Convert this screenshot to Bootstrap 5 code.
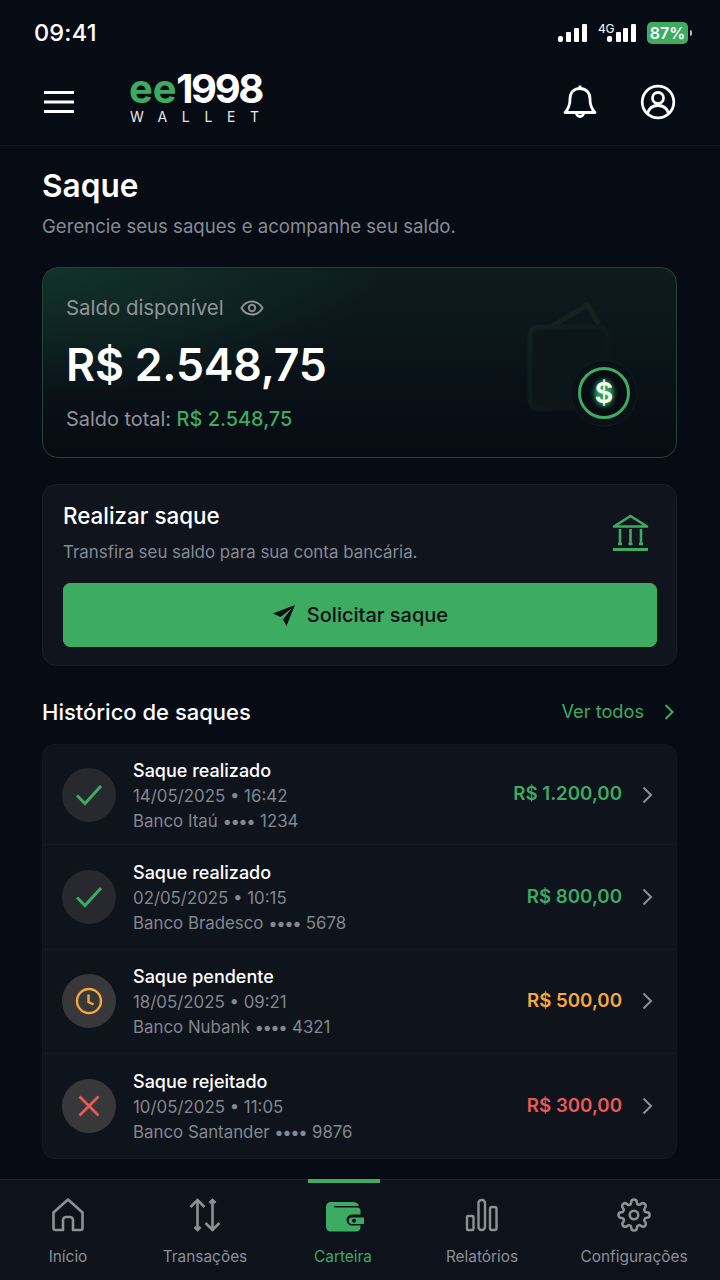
<!DOCTYPE html>
<html lang="pt-BR">
<head>
    <meta charset="UTF-8">
    <meta name="viewport" content="width=device-width, initial-scale=1.0">
    <title>Saque</title>
    <link href="https://cdn.jsdelivr.net/npm/bootstrap@5.3.0/dist/css/bootstrap.min.css" rel="stylesheet">
    <style>
        body { background: #070b14; font-family: Inter, "Noto Sans", sans-serif; color: #fff; width: 720px; height: 1280px; overflow: hidden; }
        .app-shell { height: 1280px; }
        .status-line { height: 66px; padding: 19px 28px 0 34px; }
        .status-time { font-size: 23.5px; font-weight: 500; line-height: 28px; letter-spacing: .2px; }
        .net-label { font-size: 12px; line-height: 11px; letter-spacing: -.3px; width: 18px; margin-left: 10px; margin-right: -9px; margin-top: -10px; }
        .batt-pill { background: #3dab62; border-radius: 5px; font-size: 16px; font-weight: 600; line-height: 22px; height: 22px; width: 41px; text-align: center; margin-left: 10px; }
        .batt-tip { width: 2px; height: 6px; background: #bbb; border-radius: 0 2px 2px 0; margin-left: 2px; }
        .top-bar { height: 80px; border-bottom: 1px solid #141922; padding: 0 44px 8px; }
        .logo-box { margin-left: 55px; margin-top: -9px; }
        .logo-main { font-size: 40px; font-weight: 700; line-height: 36px; letter-spacing: -2.4px; white-space: nowrap; }
        .logo-green { letter-spacing: -.2px; }
        .logo-green, .txt-green { color: #3dab62; }
        .logo-sub { font-size: 14px; line-height: 14px; letter-spacing: 14.6px; margin-top: 3px; padding-left: 1px; color: #e8e8e8; white-space: nowrap; }
        .page-body { padding: 0 43px 0 42px; }
        .page-title { font-size: 31.6px; font-weight: 600; line-height: 40px; margin: 20px 0 0; }
        .page-sub { font-size: 18.6px; line-height: 24px; color: #868b94; margin: 8px 0 0; }
        .balance-box { height: 191px; margin-top: 29px; border: 1px solid #234638; border-radius: 16px; background: radial-gradient(ellipse 340px 130px at 0 0, #12322a 0%, rgba(18,50,42,0) 100%), linear-gradient(180deg, #0e1c1e 0%, #0a1319 50%, #070b13 100%); padding: 26px 23px 0; overflow: hidden; }
        .balance-label { font-size: 20.4px; line-height: 28px; color: #8f9598; }
        .balance-value { font-size: 44.6px; font-weight: 600; line-height: 54px; margin-top: 16px; letter-spacing: -.2px; }
        .balance-total { font-size: 19.9px; line-height: 28px; color: #8f949a; margin-top: 13px; }
        .balance-total b { font-weight: 500; }
        .balance-art { right: 37px; top: 32px; }
        .withdraw-box { margin-top: 26px; height: 182px; background: #10141d; border: 1px solid #191e28; border-radius: 14px; padding: 15px 20px 0; }
        .withdraw-title { font-size: 22.4px; font-weight: 500; line-height: 32px; margin: 0; }
        .withdraw-sub { font-size: 16.9px; line-height: 22px; color: #858a93; margin: 9px 0 0; }
        .bank-icon { margin: 14px 7px 0 0; }
        .btn-saque { --bs-btn-bg: #3dab62; --bs-btn-hover-bg: #3dab62; --bs-btn-active-bg: #3dab62; --bs-btn-border-color: #3dab62; --bs-btn-color: #0a0f14; --bs-btn-hover-color: #0a0f14; width: 594px; height: 64px; margin-top: 20px; border-radius: 7px; font-size: 20px; font-weight: 500; gap: 11px; }
        .section-head { margin-top: 30px; height: 32px; }
        .section-title { font-size: 22px; font-weight: 500; line-height: 32px; margin: 0; }
        .see-all { font-size: 18.2px; color: #3dab62; text-decoration: none; gap: 20px; margin-right: 3px; }
        .history-list { margin-top: 16px; border-radius: 12px; background: #0f131c; border: 1px solid #131821; --bs-list-group-bg: transparent; --bs-list-group-border-width: 0; }
        .history-row { height: 104.5px; padding: 0 23px 0 19px; border-bottom: 1px solid #141922 !important; color: #fff; background: transparent; }
        .history-row:first-child { height: 100px; }
        .history-row:last-child { border-bottom: 0 !important; height: 104px; }
        .state-dot { width: 54px; height: 54px; border-radius: 50%; background: #27292e; flex: none; margin-right: 17px; }
        .state-warn, .state-bad { background: #38383a; }
        .row-text { padding-top: 2px; }
        .row-title { font-size: 18px; font-weight: 500; line-height: 26px; }
        .row-line { font-size: 16.85px; line-height: 25px; color: #83878f; }
        .row-dots { letter-spacing: -1.5px; margin-right: 1px; }
        .row-amount { font-size: 18.7px; font-weight: 600; margin-right: 20px; }
        .amt-ok { color: #3dab62; }
        .amt-warn { color: #f5a83c; }
        .amt-bad { color: #ea5a55; }
        .bottom-tabs { height: 101px; background: #0e121b; border-top: 1px solid #1c212b; }
        .tab-item { text-decoration: none; color: #8c9097; font-size: 15.4px; line-height: 20px; padding-top: 18px; }
        .tab-item.is-on { color: #3dab62; }
        .tab-item svg { margin-bottom: 15px; }
        .tab-item svg.wallet-ico { margin-left: 3px; }
        .tab-bar-on { top: -1px; left: 50%; margin-left: -35px; width: 72px; height: 4px; background: #3dab62; }
        .tab-1 { width: 136px; }
        .tab-2 { width: 138px; }
        .tab-3 { width: 138px; }
        .tab-4 { width: 140px; }
        .tab-5 { width: 164px; }
    </style>
</head>
<body>
    <div class="app-shell d-flex flex-column">
        <!-- Status bar -->
        <div class="status-line d-flex justify-content-between align-items-start flex-shrink-0">
            <span class="status-time">09:41</span>
            <div class="d-flex align-items-center" style="margin-top:3px">
                <svg width="30" height="20" viewBox="0 0 30 20" fill="#fff"><rect x="0" y="13" width="5" height="6" rx="2"/><rect x="8" y="9" width="5" height="10" rx="1"/><rect x="16" y="5" width="5" height="14" rx="1"/><rect x="24" y="1" width="5" height="18" rx="1"/></svg>
                <span class="net-label">4G</span>
                <svg width="30" height="20" viewBox="0 0 30 20" fill="#fff"><rect x="0" y="13" width="5" height="6" rx="2"/><rect x="9" y="9" width="5" height="10" rx="1"/><rect x="16" y="5" width="5" height="14" rx="1"/><rect x="24" y="1" width="5" height="18" rx="1"/></svg>
                <span class="batt-pill">87%</span>
                <span class="batt-tip"></span>
            </div>
        </div>

        <!-- Header -->
        <div class="top-bar d-flex align-items-center flex-shrink-0">
            <svg width="30" height="24" viewBox="0 0 30 24" fill="#fff"><rect y="1" width="30" height="3"/><rect y="10.500" width="30" height="3"/><rect y="20" width="30" height="3"/></svg>
            <div class="logo-box">
                <div class="logo-main"><span class="logo-green">ee</span>1998</div>
                <div class="logo-sub">WALLET</div>
            </div>
            <div class="ms-auto d-flex align-items-center" style="gap:42px">
                <svg width="36" height="38" viewBox="0 0 36 38" fill="none" stroke="#fff" stroke-width="2.800" stroke-linejoin="round"><path d="M18 5.500c-6.500 0-10 4.600-10 10.500 0 6.500-1.500 10-5 13.500h30c-3.500-3.500-5-7-5-13.500 0-5.900-3.500-10.500-10-10.500z"/><path d="M18 5.500V2.500"/><path d="M14.500 30a3.500 3.500 0 0 0 7 0"/></svg>
                <svg width="36" height="36" viewBox="0 0 36 36" fill="none" stroke="#fff" stroke-width="2.800"><circle cx="18" cy="18" r="15.800"/><circle cx="18" cy="14" r="5.500"/><path d="M7.500 29.500c1.500-5.500 5.500-8 10.500-8s9 2.500 10.500 8"/></svg>
            </div>
        </div>

        <!-- Content -->
        <div class="page-body flex-grow-1">
            <h1 class="page-title">Saque</h1>
            <p class="page-sub">Gerencie seus saques e acompanhe seu saldo.</p>

            <div class="balance-box position-relative">
                <div class="balance-label d-flex align-items-center gap-3">Saldo disponível
                    <svg width="24" height="18" viewBox="0 0 24 18" fill="none" stroke="#8a9094" stroke-width="2"><path d="M1.500 9C4 4.500 7.500 2.500 12 2.500S20 4.500 22.500 9C20 13.500 16.500 15.500 12 15.500S4 13.500 1.500 9z"/><circle cx="12" cy="9" r="3.200"/></svg>
                </div>
                <div class="balance-value">R$ 2.548,75</div>
                <div class="balance-total">Saldo total: <b class="txt-green">R$ 2.548,75</b></div>
                <svg class="balance-art position-absolute" width="112" height="130" viewBox="0 0 112 130" fill="none">
                    <defs>
                        <filter id="dollarGlow" x="-60%" y="-60%" width="220%" height="220%"><feGaussianBlur stdDeviation="2.500"/></filter>
                        <linearGradient id="ghostFill" x1="0" y1="0" x2="1" y2="1"><stop offset="0" stop-color="#122220"/><stop offset="1" stop-color="#0a1118"/></linearGradient>
                    </defs>
                    <path d="M24 27 L60 5 L72 24" stroke="#14231f" stroke-width="5" stroke-linejoin="round"/>
                    <rect x="3" y="27" width="78" height="82" rx="9" fill="#0c1518" stroke="url(#ghostFill)" stroke-width="5"/>
                    <circle cx="77" cy="93" r="33" fill="#0a1016" stroke="#0f1d1b" stroke-width="1"/>
                    <circle cx="77" cy="93" r="24.500" fill="#070c12" stroke="#3dab62" stroke-width="3"/>
                    <ellipse cx="77" cy="93" rx="9.500" ry="13" fill="#2fa35c" filter="url(#dollarGlow)"/>
                    <text x="77" y="103" text-anchor="middle" fill="#f2fff6" font-family="Inter, sans-serif" font-size="29" font-weight="600">$</text>
                </svg>
            </div>

            <div class="withdraw-box">
                <div class="d-flex justify-content-between">
                    <div>
                        <h2 class="withdraw-title">Realizar saque</h2>
                        <p class="withdraw-sub">Transfira seu saldo para sua conta bancária.</p>
                    </div>
                    <svg class="bank-icon" width="37" height="37" viewBox="0 0 37 37" fill="none" stroke="#3dab62" stroke-width="2.600" stroke-linejoin="round"><path d="M2 12.500L18.500 2 35 12.500z"/><path d="M8 15v15M18.500 15v15M29 15v15"/><path d="M6 30h4M16.500 30h4M27 30h4" stroke-width="2.400"/><path d="M1 35.500h35" stroke-width="3"/></svg>
                </div>
                <button type="button" class="btn btn-saque d-flex align-items-center justify-content-center">
                    <svg width="24" height="24" viewBox="0 0 24 24" fill="#0a0f14"><path d="M23 2L1 10.500l7.500 3.500L20 5 11 16.500 14.500 23z"/></svg>
                    <span>Solicitar saque</span>
                </button>
            </div>

            <div class="section-head d-flex justify-content-between align-items-center">
                <h2 class="section-title">Histórico de saques</h2>
                <a href="#" class="see-all d-flex align-items-center">Ver todos
                    <svg width="10" height="16" viewBox="0 0 10 16" fill="none" stroke="#3dab62" stroke-width="2"><path d="M1.500 1l7 7-7 7"/></svg>
                </a>
            </div>

            <div class="list-group history-list">
                <div class="list-group-item history-row d-flex align-items-center">
                    <div class="state-dot d-flex align-items-center justify-content-center">
                        <svg width="28" height="22" viewBox="0 0 28 22" fill="none" stroke="#3dab62" stroke-width="3"><path d="M2 11.500l8 8L26 2"/></svg>
                    </div>
                    <div class="flex-grow-1 row-text">
                        <div class="row-title">Saque realizado</div>
                        <div class="row-line">14/05/2025 • 16:42</div>
                        <div class="row-line">Banco Itaú <span class="row-dots">••••</span> 1234</div>
                    </div>
                    <span class="row-amount amt-ok">R$ 1.200,00</span>
                    <svg width="11" height="18" viewBox="0 0 11 18" fill="none" stroke="#8c9097" stroke-width="2"><path d="M1.500 1.500L9 9l-7.500 7.500"/></svg>
                </div>
                <div class="list-group-item history-row d-flex align-items-center">
                    <div class="state-dot d-flex align-items-center justify-content-center">
                        <svg width="28" height="22" viewBox="0 0 28 22" fill="none" stroke="#3dab62" stroke-width="3"><path d="M2 11.500l8 8L26 2"/></svg>
                    </div>
                    <div class="flex-grow-1 row-text">
                        <div class="row-title">Saque realizado</div>
                        <div class="row-line">02/05/2025 • 10:15</div>
                        <div class="row-line">Banco Bradesco <span class="row-dots">••••</span> 5678</div>
                    </div>
                    <span class="row-amount amt-ok">R$ 800,00</span>
                    <svg width="11" height="18" viewBox="0 0 11 18" fill="none" stroke="#8c9097" stroke-width="2"><path d="M1.500 1.500L9 9l-7.500 7.500"/></svg>
                </div>
                <div class="list-group-item history-row d-flex align-items-center">
                    <div class="state-dot state-warn d-flex align-items-center justify-content-center">
                        <svg width="28" height="28" viewBox="0 0 28 28" fill="none" stroke="#f5a83c" stroke-width="2.400"><circle cx="14" cy="14" r="12"/><path d="M13.500 7.500V15l5 2.500"/></svg>
                    </div>
                    <div class="flex-grow-1 row-text">
                        <div class="row-title">Saque pendente</div>
                        <div class="row-line">18/05/2025 • 09:21</div>
                        <div class="row-line">Banco Nubank <span class="row-dots">••••</span> 4321</div>
                    </div>
                    <span class="row-amount amt-warn">R$ 500,00</span>
                    <svg width="11" height="18" viewBox="0 0 11 18" fill="none" stroke="#8c9097" stroke-width="2"><path d="M1.500 1.500L9 9l-7.500 7.500"/></svg>
                </div>
                <div class="list-group-item history-row d-flex align-items-center">
                    <div class="state-dot state-bad d-flex align-items-center justify-content-center">
                        <svg width="24" height="24" viewBox="0 0 24 24" fill="none" stroke="#ea5a55" stroke-width="2.800"><path d="M2.500 2.500l19 19M21.500 2.500l-19 19"/></svg>
                    </div>
                    <div class="flex-grow-1 row-text">
                        <div class="row-title">Saque rejeitado</div>
                        <div class="row-line">10/05/2025 • 11:05</div>
                        <div class="row-line">Banco Santander <span class="row-dots">••••</span> 9876</div>
                    </div>
                    <span class="row-amount amt-bad">R$ 300,00</span>
                    <svg width="11" height="18" viewBox="0 0 11 18" fill="none" stroke="#8c9097" stroke-width="2"><path d="M1.500 1.500L9 9l-7.500 7.500"/></svg>
                </div>
            </div>
        </div>

        <!-- Bottom nav -->
        <nav class="bottom-tabs d-flex flex-shrink-0">
            <a href="#" class="tab-item tab-1 d-flex flex-column align-items-center">
                <svg width="32" height="34" viewBox="0 0 32 34" fill="none" stroke="#8c9097" stroke-width="2.600" stroke-linejoin="round"><path d="M1.500 14.500L16 1.500l14.500 13v15.500a2 2 0 0 1-2 2H21V22a3 3 0 0 0-3-3h-4a3 3 0 0 0-3 3v10H3.500a2 2 0 0 1-2-2z"/></svg>
                <span>Início</span>
            </a>
            <a href="#" class="tab-item tab-2 d-flex flex-column align-items-center">
                <svg width="34" height="34" viewBox="0 0 34 34" fill="none" stroke="#8c9097" stroke-width="2.600"><path d="M9.500 2v30"/><path d="M2.500 9l7-7 7 7"/><path d="M6.500 29l3 3 3-3"/><path d="M24.500 2v30"/><path d="M17.500 25l7 7 7-7"/><path d="M21.500 5l3-3 3 3"/></svg>
                <span>Transações</span>
            </a>
            <a href="#" class="tab-item tab-3 is-on d-flex flex-column align-items-center position-relative">
                <span class="tab-bar-on position-absolute"></span>
                <svg class="wallet-ico" width="40" height="34" viewBox="0 0 40 34" fill="#3dab62"><path d="M6 4h22c3 0 5 1 6 4H10c-1.500 0-1.500 1.500 0 1.500h22c2.500 0 3.500 1.500 3.500 3.500v3.500H27a5.500 5.500 0 0 0 0 11h8.500V29c0 3-2 4.500-4.500 4.500H6c-3 0-5-2-5-5V9c0-3 2-5 5-5z"/><path d="M27 19.500h12v6.500H27a3.250 3.250 0 0 1 0-6.500z"/><circle cx="29" cy="22.750" r="2" fill="#0e121b"/></svg>
                <span>Carteira</span>
            </a>
            <a href="#" class="tab-item tab-4 d-flex flex-column align-items-center">
                <svg width="34" height="34" viewBox="0 0 34 34" fill="none" stroke="#8c9097" stroke-width="2.400" stroke-linejoin="round"><rect x="2" y="18" width="6.500" height="14" rx="1"/><rect x="13.500" y="2" width="6.500" height="30" rx="3"/><rect x="25" y="9" width="6.500" height="23" rx="2"/></svg>
                <span>Relatórios</span>
            </a>
            <a href="#" class="tab-item tab-5 d-flex flex-column align-items-center">
                <svg width="34" height="34" viewBox="0 0 24 24" fill="none" stroke="#8c9097" stroke-width="1.800" stroke-linejoin="round"><circle cx="12" cy="12" r="3"/><path d="M19.400 15a1.650 1.650 0 0 0 .33 1.820l.06.06a2 2 0 1 1-2.830 2.830l-.06-.06a1.650 1.650 0 0 0-2.820 1.170V21a2 2 0 1 1-4 0v-.09a1.650 1.650 0 0 0-2.820-1.200l-.06.06a2 2 0 1 1-2.830-2.830l.06-.06a1.650 1.650 0 0 0-1.170-2.820H3a2 2 0 1 1 0-4h.09a1.650 1.650 0 0 0 1.200-2.820l-.06-.06a2 2 0 1 1 2.830-2.830l.06.06a1.650 1.650 0 0 0 1.820.33H9a1.650 1.650 0 0 0 1-1.510V3a2 2 0 1 1 4 0v.09a1.650 1.650 0 0 0 2.820 1.170l.06-.06a2 2 0 1 1 2.830 2.830l-.06.06a1.650 1.650 0 0 0-.33 1.820V9a1.650 1.650 0 0 0 1.510 1H21a2 2 0 1 1 0 4h-.09a1.650 1.650 0 0 0-1.510 1z"/></svg>
                <span>Configurações</span>
            </a>
        </nav>
    </div>
    <script src="https://cdn.jsdelivr.net/npm/bootstrap@5.3.0/dist/js/bootstrap.bundle.min.js"></script>
</body>
</html>
